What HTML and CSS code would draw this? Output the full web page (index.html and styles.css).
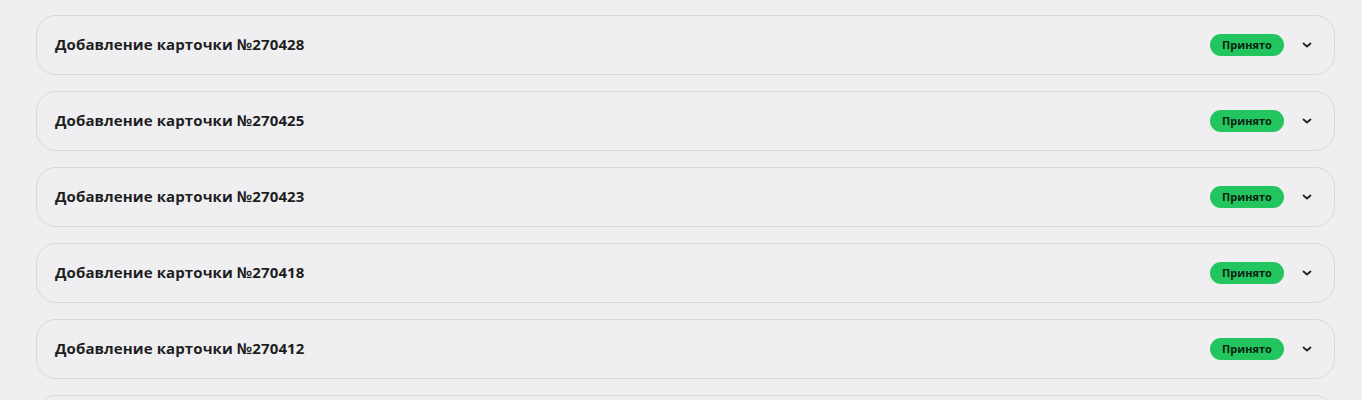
FILE: index.html
```html
<!DOCTYPE html>
<html lang="ru">
<head>
<meta charset="utf-8">
<link rel="stylesheet" href="styles.css">
</head>
<body>
<div class="list">
  <div class="card"><span class="title">Добавление карточки №270428</span><span class="badge">Принято</span><svg class="chev" viewBox="0 0 10 6"><path d="M1.5 1.5 L5 4.5 L8.5 1.5"/></svg></div>
  <div class="card"><span class="title">Добавление карточки №270425</span><span class="badge">Принято</span><svg class="chev" viewBox="0 0 10 6"><path d="M1.5 1.5 L5 4.5 L8.5 1.5"/></svg></div>
  <div class="card"><span class="title">Добавление карточки №270423</span><span class="badge">Принято</span><svg class="chev" viewBox="0 0 10 6"><path d="M1.5 1.5 L5 4.5 L8.5 1.5"/></svg></div>
  <div class="card"><span class="title">Добавление карточки №270418</span><span class="badge">Принято</span><svg class="chev" viewBox="0 0 10 6"><path d="M1.5 1.5 L5 4.5 L8.5 1.5"/></svg></div>
  <div class="card"><span class="title">Добавление карточки №270412</span><span class="badge">Принято</span><svg class="chev" viewBox="0 0 10 6"><path d="M1.5 1.5 L5 4.5 L8.5 1.5"/></svg></div>
  <div class="card card-empty"></div>
</div>
</body>
</html>
```

FILE: styles.css
```css
html, body {
  margin: 0;
  background: #efeff1;
  font-family: "Open Sans", "Noto Sans", sans-serif;
}
.list {
  display: flex;
  flex-direction: column;
  gap: 16px;
  padding: 15px 27px 0 36px;
}
.card {
  display: flex;
  align-items: center;
  height: 60px;
  box-sizing: border-box;
  border: 1.5px solid #d9d9dc;
  border-radius: 20px;
  background: #efeff1;
  padding: 0 22px 0 18px;
}
.title {
  flex: 1;
  font-size: 15px;
  font-weight: 700;
  color: #1e1e22;
  letter-spacing: 0.1px;
  margin-top: -2px;
}
.badge {
  background: #22c55e;
  color: #0b2211;
  font-size: 11px;
  font-weight: 700;
  border-radius: 11px;
  height: 22px;
  line-height: 22px;
  width: 74px;
  text-align: center;
}
.chev {
  width: 10px;
  height: 6px;
  margin-left: 18px;
  fill: none;
  stroke: #222;
  stroke-width: 1.8;
  stroke-linecap: round;
  stroke-linejoin: round;
}
```
